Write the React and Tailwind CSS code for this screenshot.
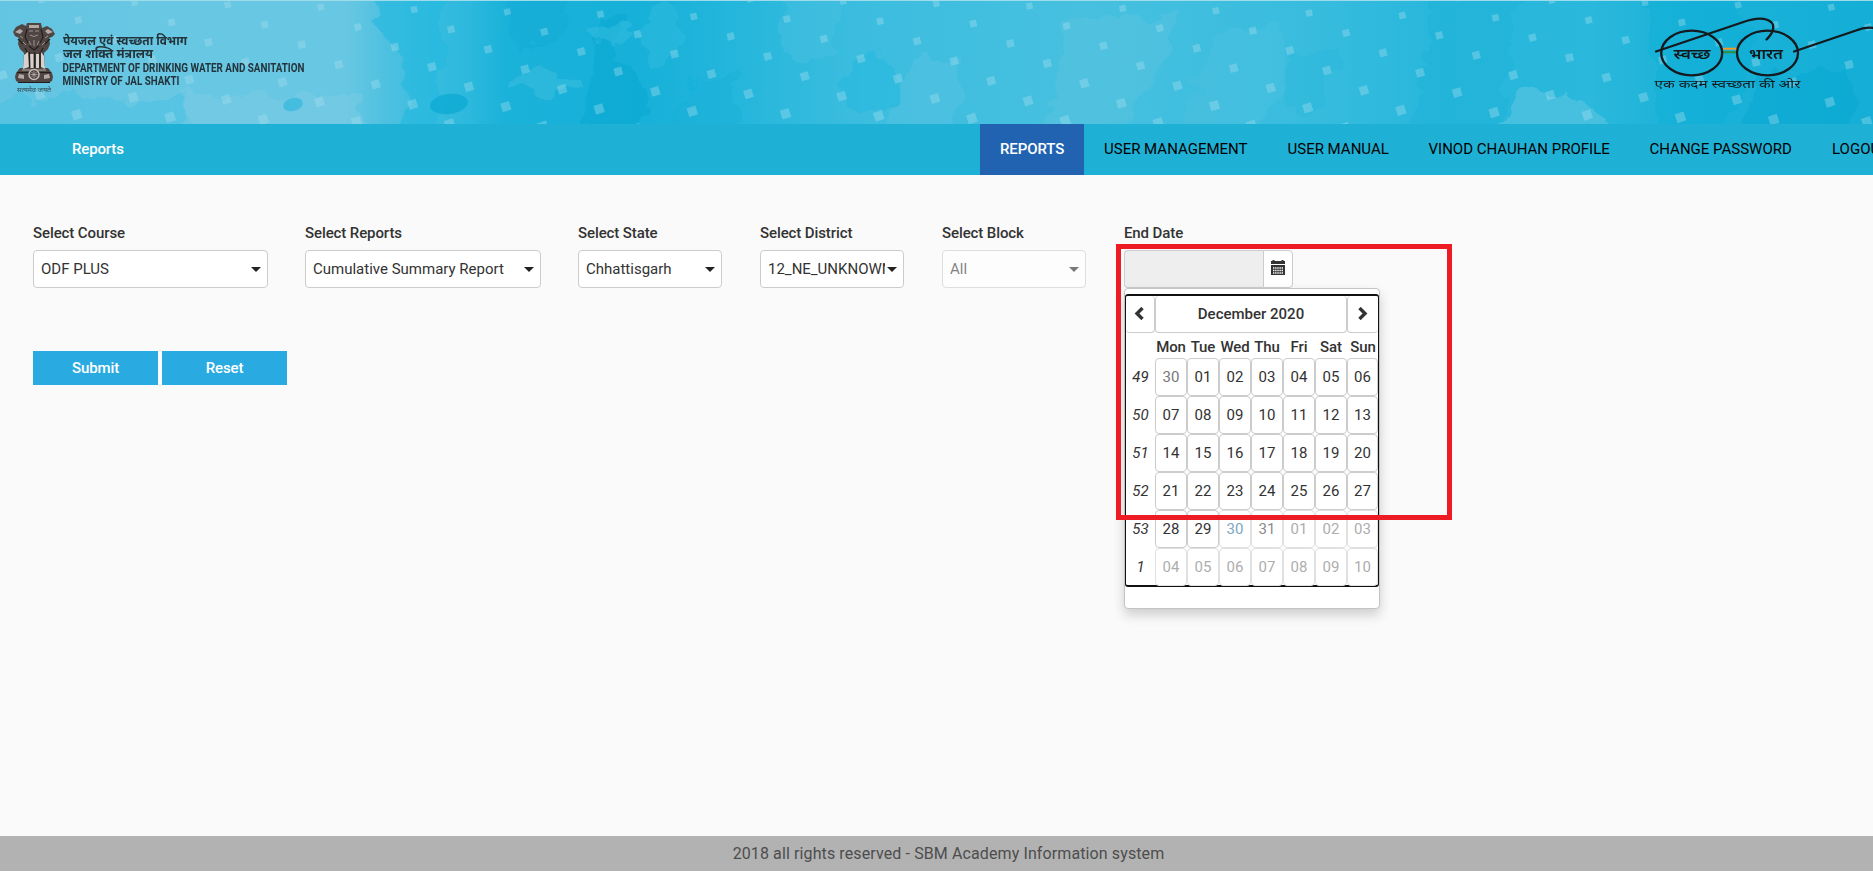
import React from "react";

const dots = [];
for (let m = -30; m < 30; m++) {
  for (let n = -15; n < 35; n++) {
    const x = 78.3 + n * 93.2 + m * 37;
    const y = 20 + n * 2.35 + m * 19.9;
    if (x > -10 && x < 1885 && y > -6 && y < 130) dots.push([x, y]);
  }
}

function HeaderArt() {
  return (
    <svg className="absolute inset-0" width="1873" height="124" viewBox="0 0 1873 124">
      <defs>
        <linearGradient id="wash">
          <stop offset="0" stopColor="#63c5e2" />
          <stop offset="0.08" stopColor="#68c7e3" />
          <stop offset="0.185" stopColor="#68c7e3" />
          <stop offset="0.205" stopColor="#4fc1e0" />
          <stop offset="0.23" stopColor="#38bcdf" />
          <stop offset="0.25" stopColor="#2cb9dd" />
          <stop offset="0.27" stopColor="#1bb2d9" />
          <stop offset="0.34" stopColor="#16b0d8" />
          <stop offset="0.4" stopColor="#27b7dc" />
          <stop offset="0.46" stopColor="#3cbddf" />
          <stop offset="0.58" stopColor="#47c0df" />
          <stop offset="0.7" stopColor="#38bcde" />
          <stop offset="0.77" stopColor="#27b7dc" />
          <stop offset="0.85" stopColor="#2ab8dc" />
          <stop offset="0.9" stopColor="#1bb2d8" />
          <stop offset="1" stopColor="#14aed6" />
        </linearGradient>
        <filter id="rough" x="-10%" y="-30%" width="120%" height="160%">
          <feTurbulence type="fractalNoise" baseFrequency="0.035" numOctaves="3" seed="4" result="n" />
          <feDisplacementMap in="SourceGraphic" in2="n" scale="34" xChannelSelector="R" yChannelSelector="G" />
          <feGaussianBlur stdDeviation="0.6" />
        </filter>
      </defs>
      <rect width="1873" height="124" fill="url(#wash)" />
      <g filter="url(#rough)">
        <path d="M374 -10h76l-8 70-4 74h-28l-10-50 8-30-30-20z" fill="#25b8de" opacity=".65" />
        <path d="M-20 98h210v40H-20z" fill="#50c2e2" opacity=".6" />
        <path d="M180 94h180v44H200z" fill="#7dcce4" opacity=".45" />
        <path d="M510 -10h60l-6 40-40 30-14-20z" fill="#0fabd6" opacity=".55" />
        <path d="M600 15h20l-4 45 40 30-16 44h-60l12-60z" fill="#03a4d1" opacity=".35" />
        <ellipse cx="545" cy="82" rx="38" ry="9" fill="#3abddf" opacity=".55" />
        <ellipse cx="610" cy="34" rx="26" ry="9" fill="#3abddf" opacity=".5" />
        <ellipse cx="660" cy="35" rx="20" ry="30" fill="#2cb9dd" opacity=".6" />
        <path d="M690 75h40l16 60h-70z" fill="#12aed8" opacity=".4" />
        <path d="M780 -10h60v60l-40 20-20-30z" fill="#56c3e0" opacity=".3" />
        <ellipse cx="872" cy="86" rx="28" ry="30" fill="#24b8df" opacity=".5" />
        <path d="M910 60h50l-8 80h-70z" fill="#62c7e1" opacity=".35" />
        <path d="M1065 20h110l-8 40-60 80h-60z" fill="#60c6e0" opacity=".35" />
        <path d="M1220 30h60l10 60-40 44h-70z" fill="#57c4e0" opacity=".3" />
        <path d="M1290 50h50l-20 60h-40z" fill="#28b7dc" opacity=".35" />
        <path d="M1430 -10h90l-10 60-10 90h-85l10-70z" fill="#15afd8" opacity=".35" />
        <path d="M1515 95h60l50 44h-125z" fill="#57c5e2" opacity=".65" />
        <path d="M1640 -10h100l20 60-40 90h-60z" fill="#0fabd5" opacity=".25" />
        <path d="M1760 70h90v70h-110z" fill="#05a3cf" opacity=".35" />
      </g>
      <ellipse cx="293" cy="104.500" rx="10" ry="6.500" fill="#3dbbde" opacity=".85" transform="rotate(-14 293 104.500)" />
      <ellipse cx="449" cy="104" rx="19" ry="10" fill="#0fabd4" opacity=".85" transform="rotate(-8 449 104)" />
      <g fill="#a5dff0" opacity=".38">
        {dots.map(([x, y], i) => {
          const s = 6.2 + y / 38;
          return (
            <rect key={i} x={x - s / 2} y={y - s / 2} width={s} height={s} transform={`rotate(${-12 - y / 20} ${x} ${y})`} />
          );
        })}
      </g>
      <rect width="1873" height="1" fill="#9fdceb" />
    </svg>
  );
}

function Emblem() {
  return (
    <svg className="absolute left-3 top-[22px]" width="44" height="72" viewBox="0 0 44 72">
      <g fill="#4f4644">
        <path d="M15 1h14l1 5 5-2 5 3 3 5-3 3-3 1 1 6-2 5-4 4 1 16H11l1-16-4-4-2-5 1-6-4-2-2-4 3-5 6-3 4 2z" />
        <path d="M8 46h28l4 5 1 4-1 4-4 2H8l-4-2-1-4 1-4z" />
      </g>
      <g fill="#b5a9a5">
        <path d="M17 3h10v3H17zM3 10l5-3 3 2-3 3zM41 10l-5-3-3 2 3 3z" />
        <path d="M12 33l4-3 1 15-6 2zM18 32h3.500v14h-3zM24 32h3v14h-3zM29 30l3 4 1 13-4-2z" fill="#d8d0cd" />
        <path d="M7 52l5 1v4l-6-1zM37 52l-5 1v4l6-1zM14 60h16v1H14zM10 47.500h24v1H10z" />
      </g>
      <g fill="none" stroke="#a0928e" strokeWidth="1">
        <path d="M17 9h4M23 9h4M18 13q4 3 8 0M8 14l3 2M36 14l-3 2M11 20l3 3M33 20l-3 3M17 19l2 4M27 19l-2 4M22 18v6" />
      </g>
      <g fill="none" stroke="#231e1d" strokeWidth="1.200">
        <path d="M15 7l-2 8 3 6M29 7l2 8-3 6M17 24l5 4 5-4M6 17l5 5M38 17l-5 5M17.500 30v16M22.700 30v16M28 30v16M5 50.500h34M6 60.500h32M13 26l2 4M31 26l-2 4" />
      </g>
      <circle cx="22" cy="52.500" r="5" fill="#4a4241" stroke="#c5bab6" strokeWidth="1.500" />
      <path d="M22 49v7M18.500 52.500h7M19.500 50l5 5M24.500 50l-5 5" stroke="#c0b4b0" strokeWidth=".7" />
      <text x="5" y="70" fontSize="6" textLength="34" lengthAdjust="spacingAndGlyphs" fill="#33484f" className="font-['Noto_Sans','Noto_Sans_Devanagari',sans-serif]">सत्यमेव जयते</text>
    </svg>
  );
}

function DepartmentName() {
  return (
    <svg className="absolute left-[62px] top-[28px] overflow-visible font-['Roboto','Noto_Sans','Noto_Sans_Devanagari',sans-serif]" width="300" height="64" fill="#24343c" fontWeight="700">
      <text x="1" y="16.500" fontSize="12.500" textLength="124" lengthAdjust="spacingAndGlyphs">पेयजल एवं स्वच्छता विभाग</text>
      <text x="1" y="30" fontSize="12.500" textLength="90" lengthAdjust="spacingAndGlyphs">जल शक्ति मंत्रालय</text>
      <text x=".5" y="43.800" fontSize="12.500" textLength="242" lengthAdjust="spacingAndGlyphs">DEPARTMENT OF DRINKING WATER AND SANITATION</text>
      <text x=".5" y="57.200" fontSize="12.500" textLength="117" lengthAdjust="spacingAndGlyphs">MINISTRY OF JAL SHAKTI</text>
    </svg>
  );
}

function SwachhBharat() {
  return (
    <svg className="absolute left-[1653px] top-0 font-['Noto_Sans','Noto_Sans_Devanagari',sans-serif]" width="220" height="96" viewBox="1653 0 220 96">
      <path d="M1723 48.700h14" stroke="#f39a2b" strokeWidth="2" />
      <path d="M1723 52.200h14" stroke="#2f8f3a" strokeWidth="2" />
      <g fill="none" stroke="#141a1d" strokeWidth="2.300" strokeLinecap="round">
        <ellipse cx="1691.700" cy="53" rx="30.500" ry="22.300" />
        <ellipse cx="1767.500" cy="53" rx="30.500" ry="22.300" />
        <path d="M1656 51.500L1742 22.500C1756 17.500 1765 17 1771 22C1775.500 26 1773 33 1766.500 39.500" />
        <path d="M1794 51.500L1856 30.500Q1865 26.500 1874 28" />
      </g>
      <g fill="#12181b">
        <text x="1673.500" y="58.500" fontSize="14" fontWeight="600" textLength="37" lengthAdjust="spacingAndGlyphs">स्वच्छ</text>
        <text x="1749" y="58.500" fontSize="14" fontWeight="600" textLength="34" lengthAdjust="spacingAndGlyphs">भारत</text>
        <text x="1654.500" y="88" fontSize="11.500" textLength="146" lengthAdjust="spacingAndGlyphs">एक कदम स्वच्छता की ओर</text>
      </g>
    </svg>
  );
}

const navItems = [
  ["USER MANAGEMENT", "w-[183.500px]"],
  ["USER MANUAL", "w-[141px]"],
  ["VINOD CHAUHAN PROFILE", "w-[221px]"],
  ["CHANGE PASSWORD", "w-[182.500px]"],
  ["LOGOUT", "w-[100px]"],
];

const selects = [
  ["Select Course", "ODF PLUS", "w-[235px] mr-[37px]", false],
  ["Select Reports", "Cumulative Summary Report", "w-[236px] mr-[37px]", false],
  ["Select State", "Chhattisgarh", "w-[144px] mr-[38px]", false],
  ["Select District", "12_NE_UNKNOWN", "w-[144px] mr-[38px]", false],
  ["Select Block", "All", "w-[144px] mr-[38px]", true],
];

function SelectField({ label, value, width, disabled }) {
  return (
    <div className={`${width} shrink-0`}>
      <div className="h-[26px] pt-px text-[15px] font-medium leading-[17px] tracking-[-0.1px]">{label}</div>
      <div className={`flex h-[38px] items-center rounded border border-[#ccc] bg-white pl-[7px] pr-[6.500px] ${disabled ? "opacity-60" : ""}`}>
        <span className="min-w-0 flex-1 overflow-hidden whitespace-nowrap text-[15px]">{value}</span>
        <svg className="ml-0.5 shrink-0" width="10" height="5" viewBox="0 0 10 5">
          <path d="M0 0h10L5 5z" fill="#222" />
        </svg>
      </div>
    </div>
  );
}

const weeks = [
  ["49", ["30", "01", "02", "03", "04", "05", "06"]],
  ["50", ["07", "08", "09", "10", "11", "12", "13"]],
  ["51", ["14", "15", "16", "17", "18", "19", "20"]],
  ["52", ["21", "22", "23", "24", "25", "26", "27"]],
  ["53", ["28", "29", "30", "31", "01", "02", "03"]],
  ["1", ["04", "05", "06", "07", "08", "09", "10"]],
];

function dayStyle(row, col) {
  if (row === 0 && col === 0) return "border-[#ccc] text-[#777]";
  if (row === 4 && col === 2) return "border-[#e0e0e0] text-[#7ba7bf]";
  if (row === 4 && col === 3) return "border-[#e0e0e0] text-[#8a8a8a]";
  if (row === 5 || (row === 4 && col > 3)) return "border-[#e0e0e0] text-[#adadad]";
  return "border-[#ccc] text-[#333]";
}

function Chevron({ d }) {
  return (
    <svg width="10" height="13" viewBox="0 0 10 13">
      <path d={d} fill="none" stroke="#333" strokeWidth="3.400" />
    </svg>
  );
}

function Calendar() {
  return (
    <div className="absolute left-0 top-[38px] h-[321px] w-[256px] rounded border border-[#c4c4c4] bg-white pt-[5px] shadow-[0_6px_12px_rgba(0,0,0,0.175)]">
      <div className="h-[293px] w-[254px] rounded-[3px] border-2 border-l border-r border-[#111] text-[15px]">
        <div className="flex h-[37px]">
          <div className="flex w-[29px] items-center justify-center rounded border border-l-0 border-t-0 border-[#ccc] pb-0.5 pr-[3px]">
            <Chevron d="M8.500 1L3 6.500l5.500 5.500" />
          </div>
          <div className="flex w-[192px] items-center justify-center rounded border border-t-0 border-[#ccc] pt-px text-[15px] font-medium">December 2020</div>
          <div className="flex flex-1 items-center justify-center rounded border border-r-0 border-t-0 border-[#ccc] pb-0.5">
            <Chevron d="M1.500 1L7 6.500l-5.500 5.500" />
          </div>
        </div>
        <div className="flex h-[25px] pl-[29px] pt-[3px] text-center font-medium leading-[22px]">
          {["Mon", "Tue", "Wed", "Thu", "Fri", "Sat", "Sun"].map((d) => (
            <div key={d} className="flex w-8 shrink-0 justify-center tracking-[-0.1px]">{d}</div>
          ))}
        </div>
        {weeks.map(([week, days], r) => (
          <div key={week} className={`flex w-[252px] ${r === 5 ? "h-[37.500px]" : "h-[38px]"}`}>
            <div className="flex w-[29px] shrink-0 items-center justify-center pt-px italic">{week}</div>
            {days.map((d, c) => (
              <div key={c} className={`flex shrink-0 items-center justify-center rounded border bg-white pt-px ${c === 6 ? "w-[31px]" : "w-8"} ${dayStyle(r, c)}`}>{d}</div>
            ))}
          </div>
        ))}
      </div>
    </div>
  );
}

export default function App() {
  return (
    <div className="flex h-[879px] w-[1873px] flex-col overflow-hidden bg-white font-['Roboto',sans-serif] text-[15px] text-[#333]">
      <header className="relative h-[124px] shrink-0 overflow-hidden">
        <HeaderArt />
        <Emblem />
        <DepartmentName />
        <SwachhBharat />
      </header>
      <nav className="flex h-[51px] shrink-0 items-stretch overflow-hidden bg-[#1fb0d5] text-black">
        <div className="flex w-[980px] shrink-0 items-center pb-px pl-[72px] font-medium tracking-[-0.15px] text-white">Reports</div>
        <div className="flex w-[104px] shrink-0 items-center bg-[#2163b1] pb-px pl-5 font-medium tracking-[-0.1px] text-white">REPORTS</div>
        {navItems.map(([label, width]) => (
          <div key={label} className={`flex shrink-0 items-center whitespace-nowrap pb-px pl-5 ${width}`}>{label}</div>
        ))}
      </nav>
      <main className="flex-1 bg-[#fafafa] pl-[33px] pt-[49px]">
        <div className="flex">
          {selects.map(([label, value, width, disabled]) => (
            <SelectField key={label} label={label} value={value} width={width} disabled={disabled} />
          ))}
          <div>
            <div className="h-[26px] pt-px text-[15px] font-medium leading-[17px] tracking-[-0.1px]">End Date</div>
            <div className="relative flex h-[38px] w-[169px]">
              <div className="w-[139px] rounded-l border border-r-0 border-[#ccc] bg-[#eee]" />
              <div className="flex flex-1 justify-center rounded-r border border-[#ccc] bg-white pt-[9px]">
                <svg width="14" height="15" viewBox="0 0 14 15">
                  <path d="M0 1h1.500V0h2v1h7V0h2v1H14v3H0zM0 5h14v10H0z" fill="#333" />
                  <path d="M2 8h10M2 10.500h10M2 13h10" stroke="#fff" strokeWidth="1.300" strokeDasharray="1.400 .75" />
                </svg>
              </div>
              <Calendar />
              <div className="absolute -left-2 -top-1.5 h-[276px] w-[336px] border-[5px] border-[#ed1c24]" />
            </div>
          </div>
        </div>
        <div className="mt-[63px] flex gap-1 font-medium tracking-[-0.1px] text-white">
          <button className="h-[34px] w-[125px] bg-[#29abe2]">Submit</button>
          <button className="h-[34px] w-[125px] bg-[#29abe2]">Reset</button>
        </div>
      </main>
      <footer className="mb-2 flex h-[35px] shrink-0 items-center justify-center bg-[#b2b2b2] pl-[24px] text-base tracking-[0.11px] text-[#4d4d4d]">
        2018 all rights reserved - SBM Academy Information system
      </footer>
    </div>
  );
}
